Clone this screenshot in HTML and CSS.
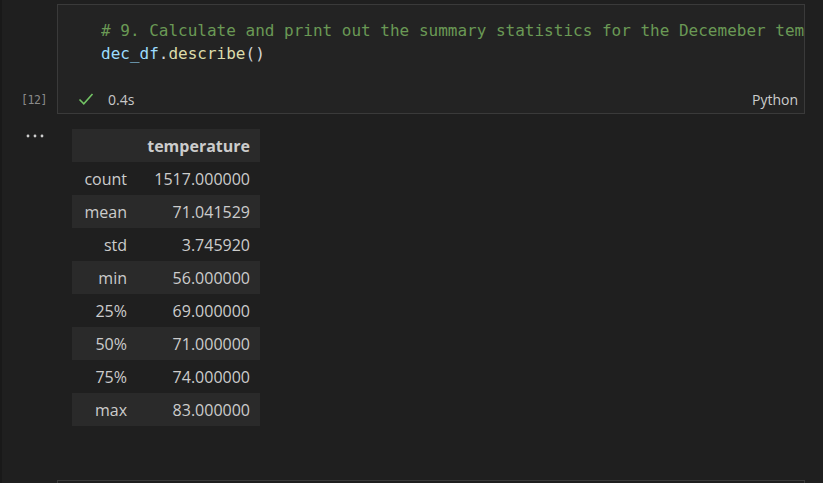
FILE: index.html
```html
<!DOCTYPE html>
<html>
<head>
<meta charset="utf-8">
<link rel="stylesheet" href="styles.css">
</head>
<body>
<div class="notebook">
  <div class="cell-row">
    <div class="gutter"><span class="exec-count">[12]</span></div>
    <div class="cell">
      <div class="editor">
        <div class="line"><span class="tok-comment"># 9. Calculate and print out the summary statistics for the Decemeber temperature data.</span></div>
        <div class="line"><span class="tok-var">dec_df</span><span class="tok-punct">.</span><span class="tok-fn">describe</span><span class="tok-punct">()</span></div>
      </div>
      <div class="status">
        <svg class="check" width="16" height="14" viewBox="0 0 16 14"><path d="M1.5 7.5 L5.8 11.8 L14.5 2" fill="none" stroke="#73c365" stroke-width="1.6"/></svg>
        <span class="time">0.4s</span>
        <span class="lang">Python</span>
      </div>
    </div>
  </div>
  <div class="output-row">
    <div class="gutter gutter-out">
      <svg class="more" width="18" height="4" viewBox="0 0 18 4"><circle cx="2" cy="2" r="1.4" fill="#cfcfcf"/><circle cx="9" cy="2" r="1.4" fill="#cfcfcf"/><circle cx="16" cy="2" r="1.4" fill="#cfcfcf"/></svg>
    </div>
    <div class="output">
      <table class="df">
        <colgroup><col class="c-idx"><col class="c-val"></colgroup>
        <thead>
          <tr class="shade"><th></th><th>temperature</th></tr>
        </thead>
        <tbody>
          <tr><th>count</th><td>1517.000000</td></tr>
          <tr class="shade"><th>mean</th><td>71.041529</td></tr>
          <tr><th>std</th><td>3.745920</td></tr>
          <tr class="shade"><th>min</th><td>56.000000</td></tr>
          <tr><th>25%</th><td>69.000000</td></tr>
          <tr class="shade"><th>50%</th><td>71.000000</td></tr>
          <tr><th>75%</th><td>74.000000</td></tr>
          <tr class="shade"><th>max</th><td>83.000000</td></tr>
        </tbody>
      </table>
    </div>
  </div>
  <div class="cell-row next-row">
    <div class="gutter"></div>
    <div class="cell next-cell"></div>
  </div>
</div>
</body>
</html>
```
FILE: styles.css
```css
html, body {
  margin: 0;
  padding: 0;
  background: #1f1f1f;
  height: 100%;
  overflow: hidden;
}
body {
  border-left: 2px solid #191919;
  box-sizing: border-box;
  font-family: "Open Sans", "Noto Sans", sans-serif;
  color: #cccccc;
}
.notebook {
  padding-top: 4px;
  width: 803px;
}
.cell-row {
  display: flex;
}
.gutter {
  width: 55px;
  flex: 0 0 55px;
  display: flex;
  flex-direction: column;
  justify-content: flex-end;
  align-items: flex-end;
  padding-right: 10px;
  box-sizing: border-box;
}
.exec-count {
  font-family: "DejaVu Sans Mono", monospace;
  font-size: 11.5px;
  color: #8b8b8b;
  line-height: 22px;
  margin-bottom: 3px;
  letter-spacing: -0.4px;
}
.cell {
  flex: 1;
  min-width: 0;
  border: 1px solid #3a3a3a;
  background: #232323;
  height: 110px;
  box-sizing: border-box;
  display: flex;
  flex-direction: column;
  overflow: hidden;
}
.editor {
  padding: 14px 0 0 43px;
  font-family: "DejaVu Sans Mono", monospace;
  font-size: 16px;
  line-height: 23px;
  flex: 1;
  min-height: 0;
  overflow: hidden;
}
.line {
  white-space: pre;
  overflow: hidden;
  height: 23px;
}
.tok-comment { color: #6a9955; }
.tok-var { color: #9cdcfe; }
.tok-fn { color: #dcdcaa; }
.tok-punct { color: #d4d4d4; }
.status {
  display: flex;
  align-items: center;
  flex: 0 0 22px;
  height: 22px;
  margin-bottom: 3px;
  padding: 0 6px 0 20px;
  font-size: 14px;
}
.check {
  display: block;
}
.time {
  margin-left: 14px;
  color: #c8c8c8;
}
.lang {
  margin-left: auto;
  color: #cccccc;
}
.output-row {
  display: flex;
}
.gutter-out {
  justify-content: flex-start;
  align-items: flex-start;
  padding: 20px 0 0 24px;
}
.more {
  display: block;
}
.output {
  padding: 15px 0 0 15px;
}
.df {
  border-collapse: collapse;
  table-layout: fixed;
  font-size: 16px;
  color: #cccccc;
}
.c-idx { width: 65px; }
.c-val { width: 123px; }
.df th, .df td {
  height: 33px;
  padding: 0 10px 0 0;
  text-align: right;
  box-sizing: border-box;
  white-space: nowrap;
}
.df tbody th {
  font-weight: normal;
}
.df thead th {
  font-weight: bold;
}
.shade {
  background: #2a2a2a;
}
.next-row {
  margin-top: 54px;
}
.next-cell {
  height: 20px;
  border-bottom: none;
  background: #1f1f1f;
}
```
